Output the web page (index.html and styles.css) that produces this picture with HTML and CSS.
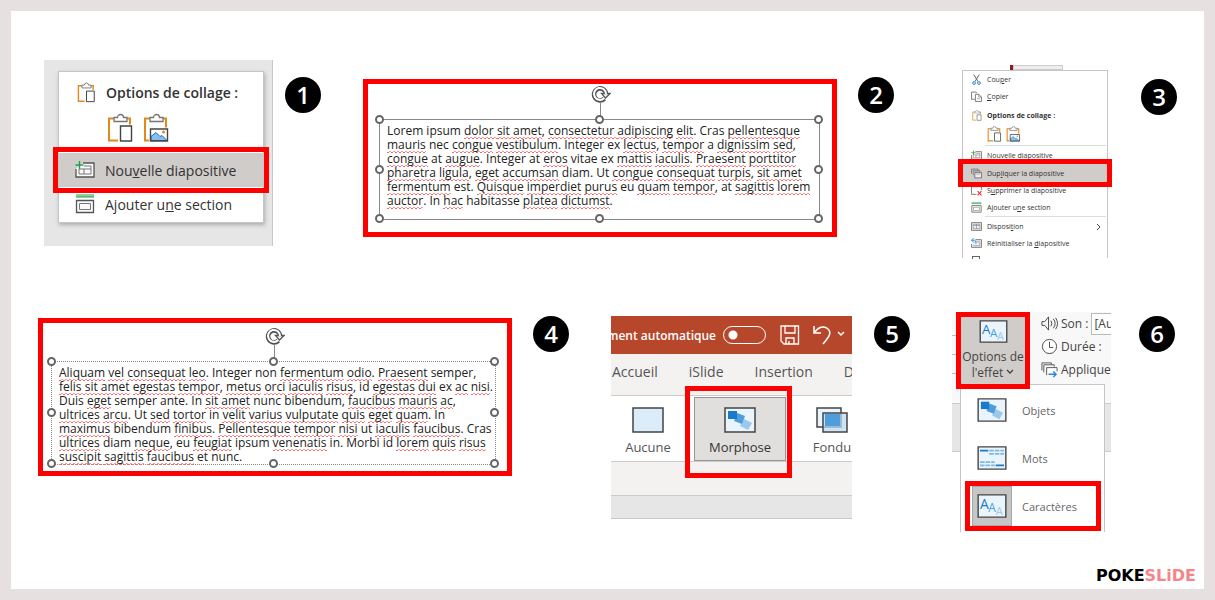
FILE: index.html
```html
<!DOCTYPE html>
<html lang="fr">
<head>
    <meta charset="UTF-8">
    <meta name="viewport" content="width=device-width, initial-scale=1.0">
    <title>Transition Morphose - Pokeslide</title>
    <link rel="stylesheet" href="styles.css">
</head>
<body>
    <svg class="sprite" aria-hidden="true">
        <symbol id="paste" viewBox="0 0 27 29">
            <path d="M8 5H2v22h9M19 5h4v6" fill="none" stroke="#e08a1e" stroke-width="2"/>
            <path d="M7 8V4h3.500a3 3 0 0 1 6 0H20v4z" fill="#fff" stroke="#777" stroke-width="1.300"/>
            <path d="M13.500 12.500h11v15h-11z" fill="#fff" stroke="#444" stroke-width="1.400"/>
        </symbol>
        <symbol id="paste-image" viewBox="0 0 27 29">
            <path d="M8 5H2v22h4M19 5h4v9" fill="none" stroke="#e08a1e" stroke-width="2"/>
            <path d="M7 8V4h3.500a3 3 0 0 1 6 0H20v4z" fill="#fff" stroke="#777" stroke-width="1.300"/>
            <path d="M7.500 15.500h17v12h-17z" fill="#fff"/>
            <path d="M8 27v-4l5-4 4 4 2-1 5 5z" fill="#83beec" stroke="#1e6fba"/>
            <circle cx="20.500" cy="18.500" r="1.500" fill="#e08a1e"/>
            <path d="M7.500 15.500h17v12h-17z" fill="none" stroke="#444" stroke-width="1.400"/>
        </symbol>
        <symbol id="new-slide" viewBox="0 0 20 20">
            <path d="M8 3h11v14H1V9" fill="#fafafa" stroke="#555" stroke-width="1.300"/>
            <path d="M9 6h7v8H4V9h12M9 9v5" fill="none" stroke="#777"/>
            <path d="M4.500 1v8M.500 5h8" stroke="#21a04b" stroke-width="1.400"/>
        </symbol>
        <symbol id="section" viewBox="0 0 20 20">
            <path d="M1 0h18v3H1z" fill="#8fd0a0"/>
            <path d="M1 3h18" stroke="#21a04b"/>
            <path d="M1.500 6.500h17v12h-17z" fill="#fafafa" stroke="#555" stroke-width="1.300"/>
            <path d="M4.500 9.500h11v6h-11z" fill="none" stroke="#777"/>
        </symbol>
        <symbol id="cut" viewBox="0 0 20 20">
            <path d="M5 1l8 13M15 1L7 14" stroke="#555" stroke-width="1.600"/>
            <circle cx="5.500" cy="16.500" r="2.500" fill="none" stroke="#2b88d8" stroke-width="1.800"/>
            <circle cx="14.500" cy="16.500" r="2.500" fill="none" stroke="#2b88d8" stroke-width="1.800"/>
        </symbol>
        <symbol id="copy" viewBox="0 0 20 20">
            <path d="M7 15H1V2h8l2 2" fill="none" stroke="#666" stroke-width="1.500"/>
            <path d="M8 6h6l5 5v8H8z" fill="#fff" stroke="#666" stroke-width="1.500"/>
            <path d="M14 6v5h5M11 14h5" fill="none" stroke="#666"/>
        </symbol>
        <symbol id="duplicate" viewBox="0 0 20 20">
            <path d="M1 10V2h12v3M4 13V5h12v3" fill="none" stroke="#666" stroke-width="1.300"/>
            <path d="M7 8h12v10H7z" fill="#eee" stroke="#555" stroke-width="1.300"/>
            <path d="M9 11h8" stroke="#777"/>
        </symbol>
        <symbol id="delete" viewBox="0 0 20 20">
            <path d="M10 17H1V3h18v6" fill="none" stroke="#666" stroke-width="1.500"/>
            <path d="M12 11l7 8M19 11l-7 8" stroke="#e0323c" stroke-width="2"/>
        </symbol>
        <symbol id="layout" viewBox="0 0 20 20">
            <path d="M1 3h18v14H1z" fill="#eee" stroke="#666" stroke-width="1.500"/>
            <path d="M4 6h12v8H4zM10 6v8M4 8h12" fill="none" stroke="#777"/>
        </symbol>
        <symbol id="reset" viewBox="0 0 20 20">
            <path d="M8 3h11v14H1v-6" fill="#eee" stroke="#666" stroke-width="1.500"/>
            <path d="M10 7h6v7H4" fill="none" stroke="#777"/>
            <path d="M5 0L1 4l4 4M1 4h5q4 1 3 6" fill="none" stroke="#2b88d8" stroke-width="1.800"/>
        </symbol>
        <symbol id="rotate" viewBox="0 0 20 18">
            <path d="M13.400 12.600a6 6 0 1 1 1.600-5.100" fill="none" stroke="#555" stroke-width="4.600"/>
            <path d="M10.500 7.500h8.500l-4.500 4.500z" fill="#fff" stroke="#555" stroke-width="1.300"/>
            <path d="M13.100 12.300a6 6 0 1 1 1.900-4.300" fill="none" stroke="#fff" stroke-width="2"/>
        </symbol>
        <symbol id="morph" viewBox="0 0 32 26">
            <path d="M1 1h30v24H1z" fill="#eaf4fc" stroke="#444" stroke-width="1.500"/>
            <path d="M20 12l8 4-4 7-8-4z" fill="#9cc8ec"/>
            <path d="M13 6l8 3-3 8-8-3z" fill="#4f9ddb"/>
            <path d="M4 4h9v8H4z" fill="#1979ca"/>
        </symbol>
        <symbol id="words" viewBox="0 0 32 26">
            <path d="M1 1h30v24H1z" fill="#eaf4fc" stroke="#444" stroke-width="1.500"/>
            <path d="M3 5h9M20 21h9" stroke="#1979ca" stroke-width="2"/>
            <path d="M13 5h16M13 8.500h16M3 17.500h16M3 21h16" stroke="#7db8e6" stroke-width="2" stroke-dasharray="5 1"/>
        </symbol>
    </svg>

    <main>
        <section class="row first-row">
            <div class="step">
                <div class="slide-panel">
                    <div class="menu">
                        <div class="menu-title"><svg><use href="#paste"/></svg>Options de collage :</div>
                        <div class="paste-options">
                            <button aria-label="Coller"><svg><use href="#paste"/></svg></button>
                            <button aria-label="Coller en image"><svg><use href="#paste-image"/></svg></button>
                        </div>
                        <button class="item selected highlight"><svg><use href="#new-slide"/></svg><span>Nou<u>v</u>elle diapositive</span></button>
                        <button class="item"><svg><use href="#section"/></svg><span>Ajouter u<u>n</u>e section</span></button>
                    </div>
                </div>
                <span class="badge">1</span>
            </div>

            <div class="step step-2">
                <div class="textbox">
                    <div class="frame">
                        <p>Lorem ipsum <i>dolor </i> <i>sit amet</i>, <i>consectetur </i> <i>adipiscing</i> <i>elit</i>. Cras <i>pellentesque</i><br>
                        <i>mauris</i> nec <i>congue</i> <i>vestibulum</i>. Integer ex <i>lectus</i>, <i>tempor</i> a <i>dignissim</i> <i>sed</i>,<br>
                        <i>congue</i> at <i>augue</i>. Integer at <i>eros</i> vitae ex <i>mattis</i> <i>iaculis</i>. <i>Praesent</i> <i>porttitor</i><br>
                        <i>pharetra</i> <i>ligula</i>, <i>eget</i> <i>accumsan</i> diam. Ut <i>congue</i> <i>consequat</i> <i>turpis</i>, <i>sit amet</i><br>
                        <i>fermentum</i> est. <i>Quisque</i> <i>imperdiet</i> <i>purus</i> eu <i>quam</i> <i>tempor</i>, at <i>sagittis</i> <i>lorem</i><br>
                        <i>auctor</i>. In <i>hac</i> habitasse <i>platea</i> <i>dictumst</i>.</p>
                        <svg class="rotate"><use href="#rotate"/></svg>
                        <b class="handle n w"></b><b class="handle n c"></b><b class="handle n e"></b>
                        <b class="handle m w"></b><b class="handle m e"></b>
                        <b class="handle s w"></b><b class="handle s c"></b><b class="handle s e"></b>
                    </div>
                </div>
                <span class="badge">2</span>
            </div>

            <div class="step step-3">
                <div class="context">
                    <div class="thumbs"><span></span><span></span></div>
                    <div class="menu small">
                        <button class="item"><svg><use href="#cut"/></svg><span>Cou<u>p</u>er</span></button>
                        <button class="item"><svg><use href="#copy"/></svg><span><u>C</u>opier</span></button>
                        <div class="menu-title"><svg><use href="#paste"/></svg>Options de collage :</div>
                        <div class="paste-options">
                            <button aria-label="Coller"><svg><use href="#paste"/></svg></button>
                            <button aria-label="Coller en image"><svg><use href="#paste-image"/></svg></button>
                        </div>
                        <hr>
                        <button class="item"><svg><use href="#new-slide"/></svg><span>Nou<u>v</u>elle diapositive</span></button>
                        <button class="item selected highlight"><svg><use href="#duplicate"/></svg><span>Dup<u>l</u>iquer la diapositive</span></button>
                        <button class="item"><svg><use href="#delete"/></svg><span>S<u>u</u>pprimer la diapositive</span></button>
                        <button class="item"><svg><use href="#section"/></svg><span>Ajouter u<u>n</u>e section</span></button>
                        <hr>
                        <button class="item"><svg><use href="#layout"/></svg><span>Disposi<u>t</u>ion</span>
                            <svg class="arrow" viewBox="0 0 6 8"><path d="M1 1l3 3-3 3" fill="none" stroke="#444"/></svg></button>
                        <button class="item"><svg><use href="#reset"/></svg><span>Réinitialiser la <u>d</u>iapositive</span></button>
                        <div class="more"></div>
                    </div>
                </div>
                <span class="badge">3</span>
            </div>
        </section>

        <section class="row second-row">
            <div class="step step-4">
                <div class="textbox dotted">
                    <div class="frame">
                        <p><i>Aliquam</i> <i>vel</i> <i>consequat</i> <i>leo</i>. Integer non <i>fermentum</i> <i>odio</i>. <i>Praesent</i> semper,<br>
                        <i>felis sit amet</i> <i>egestas</i> <i>tempor</i>, <i>metus</i> <i>orci</i> <i>iaculis</i> <i>risus</i>, id <i>egestas</i> <i>dui</i> ex <i>ac</i> <i>nisi</i>.<br>
                        Duis <i>eget</i> semper ante. In <i>sit amet</i> nunc bibendum, <i>faucibus</i> <i>mauris</i> <i>ac</i>,<br>
                        <i>ultrices</i> <i>arcu</i>. Ut <i>sed</i> <i>tortor</i> in <i>velit</i> <i>varius</i> <i>vulputate</i> <i>quis</i> <i>eget</i> <i>quam</i>. In<br>
                        <i>maximus</i> bibendum <i>finibus</i>. <i>Pellentesque</i> <i>tempor</i> <i>nisi</i> ut <i>iaculis</i> <i>faucibus</i>. Cras<br>
                        <i>ultrices</i> diam <i>neque</i>, eu <i>feugiat</i> ipsum <i>venenatis</i> in. Morbi id <i>lorem</i> <i>quis</i> <i>risus</i><br>
                        <i>suscipit</i> <i>sagittis</i> <i>faucibus</i> et nunc.</p>
                        <svg class="rotate"><use href="#rotate"/></svg>
                        <b class="handle n w"></b><b class="handle n c"></b><b class="handle n e"></b>
                        <b class="handle m w"></b><b class="handle m e"></b>
                        <b class="handle s w"></b><b class="handle s c"></b><b class="handle s e"></b>
                    </div>
                </div>
                <span class="badge">4</span>
            </div>

            <div class="step step-5">
                <div class="app">
                    <header class="titlebar">
                        <label for="autosave">ment automatique</label>
                        <input type="checkbox" id="autosave">
                        <button class="save" aria-label="Enregistrer"><svg viewBox="0 0 20 20"><path d="M1 1h17.500v18H4l-3-3zM5 1v7h10V1M6 19v-6h8v6M9 19v-3" fill="none" stroke="#fff" stroke-width="1.300"/></svg></button>
                        <button class="undo" aria-label="Annuler"><svg viewBox="0 0 32 20"><path d="M1 1v7h7M1 8c4-6 10-8 14-4s1 8-5 15" fill="none" stroke="#fff" stroke-width="1.500"/><path d="M25 7l3 3 3-3" fill="none" stroke="#fff" stroke-width="1.500"/></svg></button>
                    </header>
                    <nav class="tabs">
                        <a href="#">Accueil</a><a href="#">iSlide</a><a href="#">Insertion</a><a href="#">D</a>
                    </nav>
                    <div class="gallery">
                        <button><svg viewBox="0 0 32 26"><path d="M1 1h30v24H1z" fill="#dcecf9" stroke="#444" stroke-width="1.500"/></svg>Aucune</button>
                        <button class="active highlight"><svg><use href="#morph"/></svg>Morphose</button>
                        <button><svg viewBox="0 0 32 26"><path d="M1 1h24v19H1z" fill="#eaf4fc" stroke="#444" stroke-width="1.500"/><path d="M7 6h24v19H7z" fill="#b6d8f3" fill-opacity=".7" stroke="#444" stroke-width="1.500"/><path d="M9 7h15v12H9z" fill="#4f9ddb"/></svg>Fondu</button>
                    </div>
                    <div class="ribbon-end"></div>
                    <div class="canvas"></div>
                </div>
                <span class="badge">5</span>
            </div>

            <div class="step step-6">
                <div class="effects">
                    <div class="ribbon">
                        <div class="ticks"><span></span><span></span><span></span></div>
                        <button class="effect-button highlight">
                            <svg class="thumb" viewBox="0 0 32 26">
                                <path d="M1 1h30v24H1z" fill="#eaf4fc" stroke="#444" stroke-width="1.500"/>
                                <text x="3" y="16" font-size="15" fill="#1979ca">A</text>
                                <text x="12" y="19" font-size="13" fill="#4f9ddb">A</text>
                                <text x="20" y="23" font-size="12" fill="#9cc8ec">A</text>
                            </svg>
                            <span>Options de<br>l'effet <svg class="chevron" viewBox="0 0 8 6"><path d="M1 1l3 3 3-3" fill="none" stroke="#444" stroke-width="1.300"/></svg></span>
                        </button>
                        <div class="timing">
                            <div class="field">
                                <svg viewBox="0 0 18 16"><path d="M1 6h3l4-5v14l-4-5H1zM10.500 5q2 3 0 6M13 3q4 5 0 10M15.500 2q4 6 0 12" fill="none" stroke="#444"/></svg>
                                <label for="sound">Son :</label>
                                <input id="sound" type="text" value="[Aucun son]">
                            </div>
                            <div class="field">
                                <svg viewBox="0 0 18 18"><circle cx="9" cy="9" r="7.500" fill="#fff" stroke="#444"/><path d="M9 4v6h4" fill="none" stroke="#444"/></svg>
                                <span>Durée :</span>
                            </div>
                            <div class="field">
                                <svg viewBox="0 0 18 16"><path d="M1 9V1h10v2M3 11V3h11v2" fill="none" stroke="#555"/><path d="M6 14V6h11v4" fill="#fff" stroke="#555"/><path d="M8 13h8M13 10l3 3-3 3" fill="none" stroke="#2b88d8" stroke-width="1.500"/></svg>
                                <span>Applique</span>
                            </div>
                        </div>
                    </div>
                    <div class="band"></div>
                    <div class="dropdown">
                        <button><span class="cell"><svg><use href="#morph"/></svg></span>Objets</button>
                        <button><span class="cell"><svg><use href="#words"/></svg></span>Mots</button>
                        <button class="chosen highlight">
                            <span class="cell">
                                <svg viewBox="0 0 32 26">
                                    <path d="M1 1h30v24H1z" fill="#eaf4fc" stroke="#444" stroke-width="1.500"/>
                                    <text x="3" y="16" font-size="15" fill="#1979ca">A</text>
                                    <text x="12" y="19" font-size="13" fill="#4f9ddb">A</text>
                                    <text x="20" y="23" font-size="12" fill="#9cc8ec">A</text>
                                </svg>
                            </span>Caractères
                        </button>
                    </div>
                </div>
                <span class="badge">6</span>
            </div>
        </section>

        <footer>POKE<span>SLiDE</span></footer>
    </main>
</body>
</html>
```

FILE: styles.css
```css
* {
    box-sizing: border-box;
}
body {
    margin: 0;
    font-family: "Open Sans", "Noto Sans", sans-serif;
    color: #333;
    background-color: #fff;
}
main {
    display: flex;
    flex-direction: column;
    min-height: 100vh;
    padding: 49px 27px 3px;
    border: 11px solid #e6e0e0;
}
button {
    padding: 0;
    border: none;
    background: none;
    font: inherit;
    color: inherit;
    cursor: pointer;
}
svg {
    display: block;
    flex: none;
}
.sprite {
    position: absolute;
    width: 0;
    height: 0;
}

/* Rows of steps */
.row {
    display: grid;
    gap: 42px;
    align-items: start;
}
.first-row {
    grid-template-columns: 277fr 555fr 217fr;
    height: 198px;
    padding-left: 6px;
    margin-bottom: 54px;
}
.second-row {
    grid-template-columns: 531fr 299fr 223fr;
    padding-right: 2px;
}
.step {
    display: flex;
    align-items: flex-start;
    justify-content: space-between;
    min-width: 0;
}
.step-2 {
    padding-right: 24px;
}
.badge {
    flex: none;
    width: 36px;
    height: 36px;
    margin-top: 17px;
    border-radius: 50%;
    background-color: #000;
    color: #fff;
    font-size: 24px;
    font-weight: 600;
    line-height: 36px;
    text-align: center;
}
.second-row .badge {
    margin-top: 4px;
}

/* Red frame drawn over the thing to click */
.highlight {
    position: relative;
}
.highlight::after {
    content: "";
    position: absolute;
    inset: -6px;
    z-index: 1;
    border: 5px solid #f00;
}

/* Context menus */
.slide-panel {
    flex: 1;
    margin-right: 12px;
    padding: 11px 8px 23px 14px;
    border-right: 1px solid #c8c8c8;
    background-color: #e6e6e6;
}
.menu {
    padding-bottom: 1px;
    border: 1px solid #c6c6c6;
    background-color: #fff;
    box-shadow: 1px 2px 4px rgba(0, 0, 0, .25);
    font-size: 14px;
}
.menu-title {
    display: flex;
    align-items: center;
    gap: 10px;
    height: 41px;
    padding-left: 18px;
    font-weight: 600;
    white-space: nowrap;
}
.menu-title svg {
    width: 19px;
    height: 21px;
}
.paste-options {
    display: flex;
    gap: 9px;
    margin-bottom: 10px;
    padding-left: 48px;
}
.paste-options svg {
    width: 27px;
    height: 30px;
}
.item {
    display: flex;
    align-items: center;
    gap: 10px;
    width: 100%;
    height: 34px;
    padding-left: 16px;
    text-align: left;
    white-space: nowrap;
}
.item svg {
    width: 20px;
    height: 20px;
}
.item.selected {
    background-color: #cfccc9;
}

.step-3 {
    padding-top: 5px;
}
.step-3 .badge {
    margin-top: 14px;
}
.context {
    flex: 1;
    margin-right: 33px;
    padding-left: 2px;
}
.thumbs {
    display: flex;
    height: 5px;
    padding-left: 48px;
}
.thumbs span {
    width: 50px;
    border: 1px solid #ccc;
    background-color: #eee;
}
.thumbs span:first-child {
    width: 3px;
    border: none;
    background-color: #8b1a1a;
}
.small {
    height: 188px;
    border-bottom: none;
    box-shadow: none;
    font-size: 7px;
}
.small .item {
    height: 17px;
    padding-left: 8px;
    gap: 5px;
}
.small .item svg {
    width: 11px;
    height: 11px;
}
.small .item .arrow {
    width: 6px;
    height: 8px;
    margin: 0 5px 0 auto;
}
.small .menu-title {
    height: 21px;
    padding-left: 9px;
    gap: 5px;
    font-weight: 700;
}
.small .menu-title svg {
    width: 10px;
    height: 11px;
}
.small .paste-options {
    gap: 4px;
    margin-bottom: 3px;
    padding-left: 24px;
}
.small .paste-options svg {
    width: 15px;
    height: 16px;
}
.small .item.selected {
    height: 18px;
}
.small .highlight::after {
    inset: -5px;
}
.small hr {
    margin: 0 1px 1px 22px;
    border: none;
    border-top: 1px solid #ddd;
}
.more {
    width: 8px;
    height: 3px;
    margin: 4px 0 0 9px;
    border: 1px solid #666;
    border-bottom: none;
}

/* Slide text boxes */
.textbox {
    flex: 1;
    margin: 19px 21px 0 0;
    padding: 35px 12px 12px 11px;
    border: 5px solid #f00;
}
.frame {
    position: relative;
    padding: 4px 0 11px 7px;
    border: 1px solid #888;
}
.frame p {
    margin: 0;
    color: #222;
    font-size: 12px;
    line-height: 14px;
    white-space: nowrap;
}
.frame i {
    font-style: normal;
    background:
        repeating-linear-gradient(90deg, #f66 0 2px, transparent 2px 4px) 0 100% / 100% 1px no-repeat,
        repeating-linear-gradient(90deg, transparent 0 2px, #f99 2px 4px) 0 calc(100% - 1px) / 100% 1px no-repeat;
}
.dotted {
    margin-top: 6px;
    padding: 38px 11px 6px 8px;
}
.dotted .frame {
    padding-bottom: 0;
    border-style: dotted;
}
.handle {
    position: absolute;
    width: 9px;
    height: 9px;
    margin: -5px;
    border: 2px solid #666;
    border-radius: 50%;
    background-color: #fff;
}
.n { top: 0; }
.m { top: 50%; }
.s { top: 100%; }
.w { left: 0; }
.c { left: 50%; }
.e { left: 100%; }
.rotate {
    position: absolute;
    left: 50%;
    top: -34px;
    width: 20px;
    height: 18px;
    margin-left: -9px;
}
.frame::before {
    content: "";
    position: absolute;
    left: 50%;
    top: -17px;
    height: 16px;
    border-left: 1px solid #888;
}

/* Application window */
.step-5 {
    padding-top: 4px;
}
.second-row .step-5 .badge {
    margin-top: 0;
}
.app {
    flex: 1;
    min-width: 0;
    margin-right: 22px;
    overflow: hidden;
    font-size: 13px;
    color: #555;
}
.titlebar {
    display: flex;
    align-items: center;
    justify-content: flex-end;
    height: 38px;
    padding-right: 7px;
    background-color: #b7472a;
    color: #fff;
    font-size: 12px;
    font-weight: 600;
    white-space: nowrap;
}
.titlebar input {
    flex: none;
    appearance: none;
    width: 43px;
    height: 18px;
    margin: 0 14px 0 7px;
    border: 1px solid #fff;
    border-radius: 9px;
    background: radial-gradient(circle at 9px 8px, #fff 4px, transparent 5px);
}
.save svg {
    width: 20px;
    height: 20px;
}
.undo {
    margin-left: 13px;
}
.undo svg {
    width: 32px;
    height: 20px;
}
.tabs {
    display: flex;
    gap: 31px;
    height: 42px;
    padding: 8px 1px;
    border-bottom: 1px solid #ccc;
    background-color: #f3f2f1;
    font-size: 14px;
}
.tabs a {
    color: inherit;
    text-decoration: none;
}
.gallery {
    display: flex;
    height: 66px;
    margin-left: -9px;
    border-bottom: 1px solid #ccc;
}
.gallery button {
    display: flex;
    flex: none;
    flex-direction: column;
    align-items: center;
    gap: 5px;
    width: 92px;
    height: 64px;
    margin-top: 1px;
    padding-top: 9px;
    border: 1px solid transparent;
}
.gallery .active {
    border-color: #979593;
    background-color: #e1dfdd;
    color: #333;
}
.gallery .highlight::after {
    inset: -12px -7px -18px -10px;
}
.gallery svg {
    width: 32px;
    height: 26px;
}
.ribbon-end {
    height: 34px;
    border-bottom: 1px solid #ccc;
    background-color: #f3f2f1;
}
.canvas {
    height: 23px;
    border-bottom: 1px solid #c8c8c8;
    background-color: #e6e6e6;
}

/* Effect options */
.effects {
    position: relative;
    flex: 1;
    min-width: 0;
    height: 220px;
    margin-right: 28px;
    font-size: 12px;
    color: #444;
}
.ribbon {
    display: flex;
    height: 92px;
    border-bottom: 1px solid #ccc;
    background-color: #f8f8f8;
}
.ticks {
    display: flex;
    flex-direction: column;
    gap: 18px;
    width: 9px;
    padding-top: 23px;
}
.ticks span {
    width: 4px;
    height: 1px;
    background-color: #bbb;
}
.effect-button {
    flex: none;
    width: 64px;
    height: 67px;
    margin-top: 5px;
    background-color: #cfccc9;
    line-height: 16px;
}
.effect-button.highlight::after {
    inset: -5px;
}
.effect-button .thumb {
    width: 29px;
    height: 23px;
    margin: 0 auto 6px;
}
.chevron {
    display: inline-block;
    width: 8px;
    height: 6px;
    vertical-align: 2px;
}
.timing {
    flex: 1;
    min-width: 0;
    padding-left: 16px;
    overflow: hidden;
}
.field {
    display: flex;
    align-items: center;
    gap: 3px;
    height: 23px;
    white-space: nowrap;
}
.field svg {
    width: 17px;
    height: 17px;
}
.field input {
    flex: none;
    width: 90px;
    height: 22px;
    padding: 0 2px;
    border: 1px solid #bbb;
    background-color: #fff;
    font: inherit;
    color: inherit;
}
.band {
    height: 48px;
    border-bottom: 1px solid #ccc;
    background-color: #e6e6e6;
}
.dropdown {
    position: absolute;
    top: 72px;
    left: 8px;
    right: 6px;
    bottom: 0;
    padding-top: 5px;
    border: 1px solid #c6c6c6;
    border-bottom: none;
    background-color: #fff;
    color: #666;
}
.dropdown button {
    display: flex;
    align-items: center;
    gap: 10px;
    width: 100%;
    height: 40px;
    margin-bottom: 8px;
    padding-left: 11px;
    font-size: 11px;
}
.cell {
    display: grid;
    place-items: center;
    width: 40px;
    height: 40px;
}
.chosen .cell {
    border: 1px solid #a8a8a8;
    background-color: #c6c6c6;
}
.dropdown .highlight::after {
    inset: -5px 3px -5px 4px;
}
.cell svg {
    width: 30px;
    height: 24px;
}

footer {
    margin-top: auto;
    margin-right: -19px;
    color: #000;
    font-family: "DejaVu Sans", sans-serif;
    font-size: 16px;
    font-weight: 700;
    line-height: 20px;
    text-align: right;
}
footer span {
    color: #f4868a;
}
```
